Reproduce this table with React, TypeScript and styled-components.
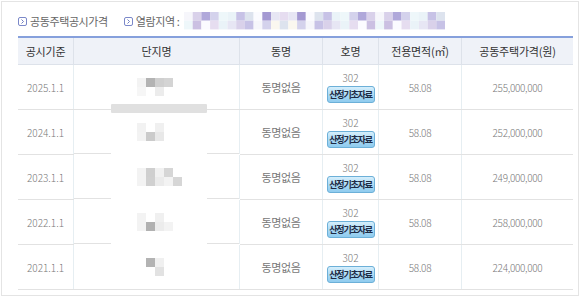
import React from 'react';
import styled, { createGlobalStyle } from 'styled-components';

const GlobalStyle = createGlobalStyle`
  html, body {
    margin: 0;
    padding: 0;
    background: #fff;
  }
  body {
    font-family: "Noto Sans CJK KR", "Noto Sans", sans-serif;
  }
`;

const Frame = styled.div`
  box-sizing: border-box;
  margin: 1px 0 0 1px;
  width: 578px;
  height: 295px;
  border: 1px solid #e4e4e4;
  padding: 10px 9px 0 16px;
`;

const TitleRow = styled.div`
  display: flex;
  align-items: center;
  height: 18px;
  margin-bottom: 6px;
`;

const TitleItem = styled.div<{ gap?: number }>`
  display: flex;
  align-items: center;
  gap: 3px;
  margin-right: ${p => p.gap ?? 0}px;
  font-size: 11px;
  letter-spacing: -0.4px;
  color: #666;
  white-space: nowrap;
`;

const Bullet = styled.span`
  box-sizing: border-box;
  width: 9px;
  height: 9px;
  border: 1px solid #7b88c9;
  border-radius: 2px;
  display: inline-flex;
  align-items: center;
  justify-content: center;
`;

const Table = styled.table`
  width: 550px;
  border-collapse: collapse;
  table-layout: fixed;
  border-top: 2px solid #86a0dc;
`;

const HeadCell = styled.th<{ w: number }>`
  width: ${p => p.w}px;
  height: 26px;
  padding: 0;
  background: #eff2f8;
  border-left: 1px solid #dde2ea;
  border-bottom: 1px solid #dde2ea;
  font-size: 11px;
  font-weight: 400;
  letter-spacing: -0.2px;
  color: #333;
  text-align: center;
  &:first-child { border-left: none; }
`;

const Cell = styled.td<{ tight?: boolean }>`
  height: 44px;
  padding: 0;
  border-left: 1px solid #e6eef2;
  border-bottom: 1px solid #e2e2e2;
  font-size: 10px;
  font-weight: 300;
  color: #777;
  text-align: center;
  letter-spacing: ${p => (p.tight ? '-0.3px' : '0')};
  &:first-child { border-left: none; }
`;

const KoCell = styled(Cell)`
  font-size: 11px;
  font-weight: 400;
  letter-spacing: -0.4px;
`;

const NameCell = styled(Cell)<{ gap: boolean }>`
  position: relative;
  border-bottom-color: ${p => (p.gap ? 'transparent' : '#e2e2e2')};
  background: ${p =>
    p.gap
      ? 'linear-gradient(to right, #e2e2e2 37px, #fff 37px, #fff 133px, #e2e2e2 133px) left bottom / 100% 1px no-repeat'
      : 'none'};
`;

const Redact = styled.div`
  position: absolute;
  left: 37px;
  bottom: -4px;
  width: 96px;
  height: 9px;
  background: #e0e0e0;
  border-radius: 1px;
`;

const HoWrap = styled.div`
  display: flex;
  flex-direction: column;
  align-items: center;
  gap: 2px;
`;

const HoNumber = styled.span`
  line-height: 12px;
`;

const DataButton = styled.button`
  box-sizing: border-box;
  width: 48px;
  height: 17px;
  padding: 0;
  border: 1px solid #6cb0d8;
  border-radius: 3px;
  background: linear-gradient(180deg, #d6effc 0%, #a9d9f4 55%, #8fcbee 100%);
  font-family: inherit;
  font-size: 9px;
  font-weight: 700;
  letter-spacing: -1.2px;
  color: #1d2a44;
  white-space: nowrap;
  cursor: pointer;
`;

const Mosaic: React.FC<{ rows: string[][]; size: number }> = ({ rows, size }) => {
  const cols = Math.max(...rows.map(r => r.length));
  return (
    <svg width={cols * size} height={rows.length * size} style={{ display: 'block' }}>
      {rows.map((r, i) =>
        r.map((c, j) => (
          <rect key={`${i}-${j}`} x={j * size} y={i * size} width={size} height={size} fill={c} />
        ))
      )}
    </svg>
  );
};

const MosaicBox = styled.div<{ shift?: number }>`
  display: flex;
  justify-content: flex-start;
  padding-left: ${p => 63 + (p.shift ?? 0)}px;
`;

const palette = ['#f6f6fb', '#e7e6f4', '#d4d2ec', '#c7c2e6', '#b0a8da', '#eef7fa', '#faf7ef', '#e6ddf0', '#d9d1ea', '#fbfbff', '#eaf3f8', '#a499d2', '#dde3ee', '#cbc0e2'];
const regionMosaic = [0, 1].map(r =>
  Array.from({ length: 30 }, (_, i) => palette[(i * 7 + r * 5 + (i * i) % 11) % palette.length])
);

const W = '#ffffff';
const names: string[][][] = [
  [['#f3f3f3', '#b3b3b3', '#cfcfcf', '#d4d4d4'], ['#f6f6f6', W, '#ececec', W]],
  [['#f2f2f2', W, '#f0f0f0'], ['#f3f3f3', '#cbcbcb', '#e8e8e8']],
  [['#f3f3f3', '#cfcfcf', '#f1f1f1', '#d6d6d6', W], ['#f3f3f3', '#d0d0d0', '#ebebeb', '#f3f3f3', '#d6d6d6']],
  [['#f3f3f3', W, '#f0f0f0', W], ['#f3f3f3', '#b1b1b1', '#ececec', '#f3f3f3']],
  [['#b3b3b3', '#f0f0f0'], [W, '#e2e2e2']],
];

const rows = [
  { year: '2025.1.1', price: '255,000,000' },
  { year: '2024.1.1', price: '252,000,000' },
  { year: '2023.1.1', price: '249,000,000' },
  { year: '2022.1.1', price: '258,000,000' },
  { year: '2021.1.1', price: '224,000,000' },
];

const Chevron = () => (
  <svg width="5" height="5" viewBox="0 0 5 5">
    <path d="M1.5 0.5 L3.5 2.5 L1.5 4.5" fill="none" stroke="#6f7dc2" strokeWidth="1" />
  </svg>
);

export default function App() {
  return (
    <>
      <GlobalStyle />
      <Frame>
        <TitleRow>
          <TitleItem gap={16}>
            <Bullet><Chevron /></Bullet>
            공동주택공시가격
          </TitleItem>
          <TitleItem gap={5}>
            <Bullet><Chevron /></Bullet>
            열람지역 :
          </TitleItem>
          <Mosaic rows={regionMosaic} size={8.7} />
        </TitleRow>
        <Table>
          <thead>
            <tr>
              <HeadCell w={55}>공시기준</HeadCell>
              <HeadCell w={165}>단지명</HeadCell>
              <HeadCell w={82}>동명</HeadCell>
              <HeadCell w={55}>호명</HeadCell>
              <HeadCell w={82}>전용면적(㎡)</HeadCell>
              <HeadCell w={111}>공동주택가격(원)</HeadCell>
            </tr>
          </thead>
          <tbody>
            {rows.map((r, i) => (
              <tr key={r.year}>
                <Cell>{r.year}</Cell>
                <NameCell gap={i > 0 && i < rows.length - 1}>
                  <MosaicBox shift={i === 4 ? 9 : 0}>
                    <Mosaic rows={names[i]} size={9} />
                  </MosaicBox>
                  {i === 0 && <Redact />}
                </NameCell>
                <KoCell>동명없음</KoCell>
                <Cell>
                  <HoWrap>
                    <HoNumber>302</HoNumber>
                    <DataButton>산정기초자료</DataButton>
                  </HoWrap>
                </Cell>
                <Cell tight>58.08</Cell>
                <Cell tight>{r.price}</Cell>
              </tr>
            ))}
          </tbody>
        </Table>
      </Frame>
    </>
  );
}
